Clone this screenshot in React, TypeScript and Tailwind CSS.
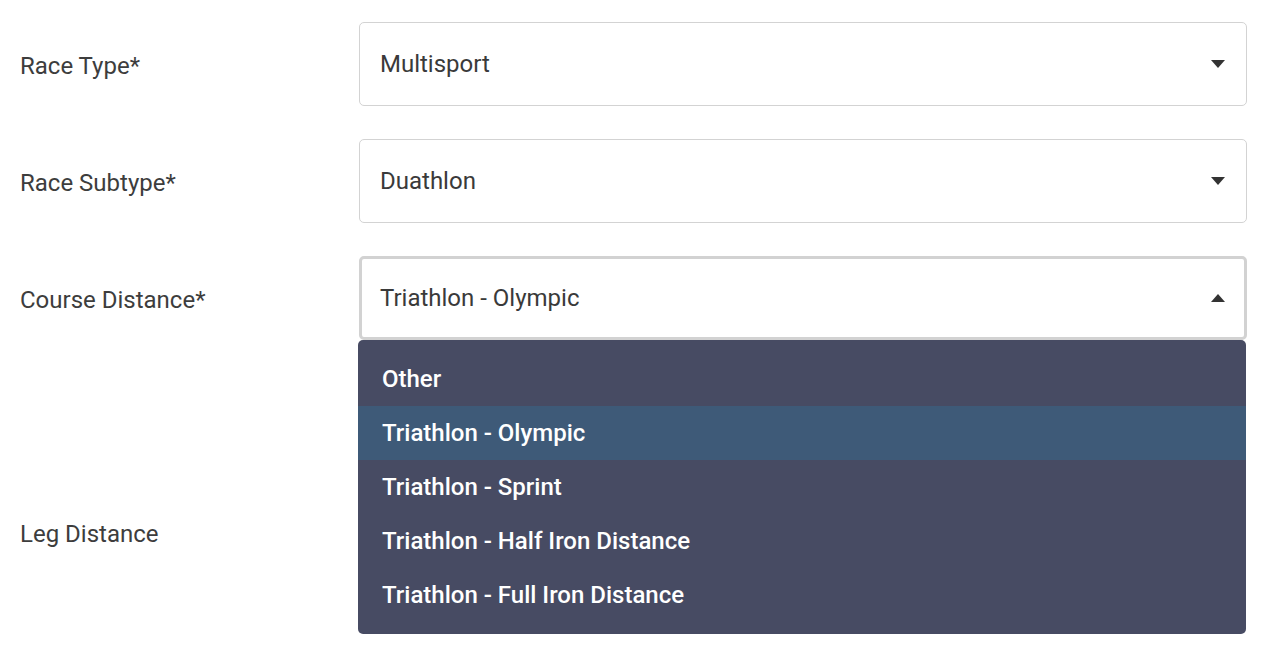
import React from "react";

const font = { fontFamily: "Roboto, 'Noto Sans', sans-serif" };

function Caret({ up = false }: { up?: boolean }) {
  return (
    <svg width="14" height="8" viewBox="0 0 14 8" className="shrink-0">
      {up ? <path d="M0 8 L7 0 L14 8 Z" fill="#333" /> : <path d="M0 0 L14 0 L7 8 Z" fill="#333" />}
    </svg>
  );
}

function SelectBox({ value, open = false }: { value: string; open?: boolean }) {
  return (
    <div
      className={
        "flex h-[84px] items-center justify-between rounded-[5px] bg-white text-[24px] text-[#3a3a3a] " +
        (open ? "border-[3px] border-[#d2d2d2] pl-[18px] pr-[19px]" : "border border-[#d3d3d3] pl-[20px] pr-[21px]")
      }
    >
      <span>{value}</span>
      <Caret up={open} />
    </div>
  );
}

const options = [
  "Other",
  "Triathlon - Olympic",
  "Triathlon - Sprint",
  "Triathlon - Half Iron Distance",
  "Triathlon - Full Iron Distance",
];

function Row({ label, children }: { label: string; children: React.ReactNode }) {
  return (
    <div className="grid grid-cols-[339px_1fr] items-center">
      <div className="pt-[4px] text-[24px] text-[#3d3d3d]">{label}</div>
      <div className="relative">{children}</div>
    </div>
  );
}

export default function App() {
  return (
    <div className="h-[645px] w-[1262px] overflow-hidden bg-white" style={font}>
      <div className="flex flex-col gap-[33px] pl-5 pr-[15px] pt-[22px]">
        <Row label="Race Type*">
          <SelectBox value="Multisport" />
        </Row>
        <Row label="Race Subtype*">
          <SelectBox value="Duathlon" />
        </Row>
        <Row label="Course Distance*">
          <SelectBox value="Triathlon - Olympic" open />
          <div className="absolute left-[-1px] right-[1px] top-[84px] z-10 rounded-[5px] bg-[#474b63] py-3">
            {options.map((o) => (
              <div
                key={o}
                className={
                  "flex h-[54px] items-center px-6 text-[24px] font-medium text-white " +
                  (o === "Triathlon - Olympic" ? "bg-[#3e5a78]" : "")
                }
              >
                {o}
              </div>
            ))}
          </div>
        </Row>
        <Row label="Leg Distance">
          {/* leg distance inputs sit under the open menu */}
          <div className="h-[317px]" />
        </Row>
      </div>
    </div>
  );
}
